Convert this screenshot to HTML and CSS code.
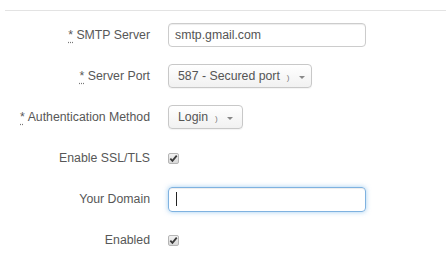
FILE: index.html
```html
<!DOCTYPE html>
<html>
<head>
<meta charset="utf-8">
<link rel="stylesheet" href="styles.css">
</head>
<body>
<div class="rule"></div>
<form class="form">
  <div class="row">
    <label class="label"><abbr class="req">*</abbr> SMTP Server</label>
    <div class="control"><div class="input wide"><span class="val">smtp.gmail.com</span></div></div>
  </div>
  <div class="row">
    <label class="label"><abbr class="req">*</abbr> Server Port</label>
    <div class="control"><div class="select port"><span class="val">587 - Secured port</span><span class="paren">)</span><span class="caret"></span></div></div>
  </div>
  <div class="row">
    <label class="label"><abbr class="req">*</abbr> Authentication Method</label>
    <div class="control"><div class="select auth"><span class="val">Login</span><span class="paren">)</span><span class="caret"></span></div></div>
  </div>
  <div class="row">
    <label class="label">Enable SSL/TLS</label>
    <div class="control"><span class="check"><svg viewBox="0 0 10 10" width="9" height="9"><path d="M1.5 5.2 L3.8 7.6 L8.6 1.8" fill="none" stroke="#3a3a3a" stroke-width="2"/></svg></span></div>
  </div>
  <div class="row">
    <label class="label">Your Domain</label>
    <div class="control"><div class="input wide focus"><span class="cursor"></span></div></div>
  </div>
  <div class="row">
    <label class="label">Enabled</label>
    <div class="control"><span class="check"><svg viewBox="0 0 10 10" width="9" height="9"><path d="M1.5 5.2 L3.8 7.6 L8.6 1.8" fill="none" stroke="#3a3a3a" stroke-width="2"/></svg></span></div>
  </div>
</form>
</body>
</html>
```
FILE: styles.css
```css
html, body {
  margin: 0;
  padding: 0;
  background: #fff;
}
body {
  font-family: "Liberation Sans", Arial, sans-serif;
  font-size: 12.3px;
  color: #555;
}
.rule {
  height: 10px;
  margin-left: 5px;
  border-bottom: 1px solid #e3e3e3;
}
.form {
  display: flex;
  flex-direction: column;
  gap: 17px;
  padding-top: 12px;
}
.row {
  display: flex;
  align-items: center;
  height: 24px;
}
.label {
  width: 150px;
  text-align: right;
  color: #575757;
  white-space: nowrap;
}
.req {
  text-decoration: underline dotted #777;
  text-underline-offset: 3px;
}
.control {
  margin-left: 18px;
  display: flex;
  align-items: center;
}
.input {
  box-sizing: border-box;
  height: 24px;
  border: 1px solid #ccc;
  border-radius: 4px;
  box-shadow: inset 0 1px 1px rgba(0,0,0,0.075);
  display: flex;
  align-items: center;
  padding-left: 6px;
  color: #555;
}
.wide {
  width: 198px;
}
.input.focus {
  height: 25px;
  border-color: #7fb2e0;
  box-shadow: inset 0 1px 1px rgba(0,0,0,0.075), 0 0 5px rgba(102,175,233,0.6);
}
.cursor {
  width: 1px;
  height: 14px;
  background: #222;
  margin-left: 1px;
}
.select {
  box-sizing: border-box;
  height: 24px;
  border: 1px solid #c8c8c8;
  border-radius: 4px;
  background: linear-gradient(#ffffff, #f1f1f1);
  display: flex;
  align-items: center;
  padding-left: 9px;
  color: #555;
  box-shadow: 0 1px 1px rgba(0,0,0,0.05);
}
.port { width: 144px; }
.auth { width: 75px; }
.paren {
  color: #777;
  font-size: 8px;
  margin-left: 7px;
  margin-top: 2px;
}
.caret {
  width: 0;
  height: 0;
  margin-left: 9px;
  border-left: 3px solid transparent;
  border-right: 3px solid transparent;
  border-top: 3px solid #888;
  margin-top: 2px;
}
.check {
  box-sizing: border-box;
  width: 11px;
  height: 11px;
  border: 1px solid #b5b5b5;
  border-radius: 2px;
  background: linear-gradient(#f2f2f2, #d9d9d9);
  display: flex;
  align-items: center;
  justify-content: center;
}
.check svg { display: block; }
```
